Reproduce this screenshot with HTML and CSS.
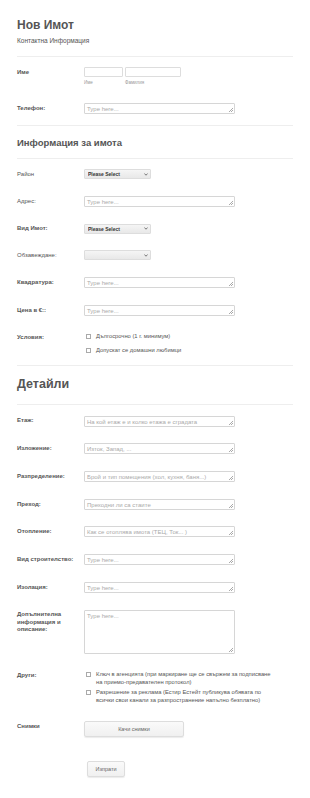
FILE: index.html
```html
<!DOCTYPE html>
<html lang="bg">
<head>
    <meta charset="UTF-8">
    <meta name="viewport" content="width=device-width, initial-scale=1.0">
    <title>Нов Имот</title>
    <link rel="stylesheet" href="styles.css">
</head>
<body>
    <form class="form" id="property-form">
        <div class="form-header">
            <h1>Нов Имот</h1>
            <div class="subheader">Контактна Информация</div>
        </div>

        <div class="section">
            <div class="row">
                <label class="label">Име</label>
                <div class="name-fields">
                    <div class="name-part">
                        <input type="text" class="input first-name">
                        <span class="sublabel">Име</span>
                    </div>
                    <div class="name-part">
                        <input type="text" class="input last-name">
                        <span class="sublabel">Фамилия</span>
                    </div>
                </div>
            </div>
            <div class="row">
                <label class="label">Телефон:</label>
                <textarea class="field" placeholder="Type here..."></textarea>
            </div>
        </div>

        <h2 class="section-title">Информация за имота</h2>
        <div class="section">
            <div class="row">
                <label class="label light">Район</label>
                <div class="select-wrap">
                    <select class="select"><option>Please Select</option></select>
                    <svg class="chevron" viewBox="0 0 6 4"><path d="M0.6 0.8 L3 3 L5.4 0.8" fill="none" stroke="#444" stroke-width="1.1"/></svg>
                </div>
            </div>
            <div class="row">
                <label class="label light">Адрес:</label>
                <textarea class="field" placeholder="Type here..."></textarea>
            </div>
            <div class="row">
                <label class="label">Вид Имот:</label>
                <div class="select-wrap">
                    <select class="select"><option>Please Select</option></select>
                    <svg class="chevron" viewBox="0 0 6 4"><path d="M0.6 0.8 L3 3 L5.4 0.8" fill="none" stroke="#444" stroke-width="1.1"/></svg>
                </div>
            </div>
            <div class="row">
                <label class="label light">Обзавеждане:</label>
                <div class="select-wrap">
                    <select class="select"><option></option></select>
                    <svg class="chevron" viewBox="0 0 6 4"><path d="M0.6 0.8 L3 3 L5.4 0.8" fill="none" stroke="#444" stroke-width="1.1"/></svg>
                </div>
            </div>
            <div class="row">
                <label class="label">Квадратура:</label>
                <textarea class="field" placeholder="Type here..."></textarea>
            </div>
            <div class="row">
                <label class="label">Цена в €::</label>
                <textarea class="field" placeholder="Type here..."></textarea>
            </div>
            <div class="row">
                <label class="label">Условия:</label>
                <div class="options spaced">
                    <label class="option"><input type="checkbox" class="check"><span>Дългосрочно (1 г. минимум)</span></label>
                    <label class="option"><input type="checkbox" class="check"><span>Допускат се домашни любимци</span></label>
                </div>
            </div>
        </div>

        <h2 class="section-title big">Детайли</h2>
        <div class="section last">
            <div class="row">
                <label class="label">Етаж:</label>
                <textarea class="field" placeholder="На кой етаж е и колко етажа е сградата"></textarea>
            </div>
            <div class="row">
                <label class="label">Изложение:</label>
                <textarea class="field" placeholder="Изток, Запад, ..."></textarea>
            </div>
            <div class="row">
                <label class="label">Разпределение:</label>
                <textarea class="field" placeholder="Брой и тип помещения (хол, кухня, баня...)"></textarea>
            </div>
            <div class="row">
                <label class="label">Преход:</label>
                <textarea class="field" placeholder="Преходни ли са стаите"></textarea>
            </div>
            <div class="row">
                <label class="label">Отопление:</label>
                <textarea class="field" placeholder="Как се отоплява имота (ТЕЦ, Ток... )"></textarea>
            </div>
            <div class="row">
                <label class="label">Вид строителство:</label>
                <textarea class="field" placeholder="Type here..."></textarea>
            </div>
            <div class="row">
                <label class="label">Изолация:</label>
                <textarea class="field" placeholder="Type here..."></textarea>
            </div>
            <div class="row">
                <label class="label">Допълнителна информация и описание:</label>
                <textarea class="field tall" placeholder="Type here..."></textarea>
            </div>
            <div class="row">
                <label class="label">Други:</label>
                <div class="options">
                    <label class="option"><input type="checkbox" class="check"><span>Ключ в агенцията (при маркиране ще се свържем за подписване на приемо-предавателен протокол)</span></label>
                    <label class="option"><input type="checkbox" class="check"><span>Разрешение за реклама (Естир Естейт публикува обявата по всички свои канали за разпространение напълно безплатно)</span></label>
                </div>
            </div>
            <div class="row">
                <label class="label">Снимки</label>
                <button type="button" class="btn upload">Качи снимки</button>
            </div>
            <div class="submit-row">
                <button type="submit" class="btn submit">Изпрати</button>
            </div>
        </div>
    </form>
</body>
</html>
```

FILE: styles.css
```css
body {
    margin: 0;
    font-family: "Liberation Sans", Arial, sans-serif;
    background-color: #fff;
    color: #555;
}

.form {
    padding: 0 17px;
}

.form-header {
    padding: 18px 0 11px;
    border-bottom: 1px solid #eee;
}

.form-header h1 {
    margin: 0;
    font-size: 12px;
    line-height: 14px;
    color: #555;
}

.subheader {
    margin-top: 5px;
    font-size: 6.5px;
    line-height: 8px;
    color: #555;
}

.section {
    padding: 2px 0 2.6px;
    border-bottom: 1px solid #eee;
}

.section.last {
    border-bottom: none;
}

.section-title {
    margin: 0;
    padding: 11px 0 9px;
    border-bottom: 1px solid #eee;
    font-size: 9.5px;
    line-height: 12px;
    font-weight: bold;
    color: #555;
}

.section-title.big {
    font-size: 12.5px;
    line-height: 14px;
    padding-bottom: 13px;
}

.row {
    display: flex;
    align-items: flex-start;
    padding: 8.35px 0;
}

.label {
    width: 67px;
    flex-shrink: 0;
    padding-top: 1.75px;
    font-size: 6px;
    line-height: 7.5px;
    font-weight: bold;
    color: #555;
}

.label.light {
    font-weight: normal;
}

.name-fields {
    display: flex;
    gap: 2px;
}

.name-part {
    display: flex;
    flex-direction: column;
}

.input {
    box-sizing: border-box;
    height: 10px;
    margin: 0;
    padding: 0 2px;
    border: 1px solid #ddd;
    border-radius: 1px;
    background: #fff;
}

.first-name {
    width: 39px;
}

.last-name {
    width: 56px;
}

.sublabel {
    margin-top: 3px;
    font-size: 4.5px;
    line-height: 6px;
    color: #999;
}

.field {
    box-sizing: border-box;
    width: 151px;
    height: 11px;
    margin: 0;
    padding: 2px 2px 0;
    border: 1px solid #d6d6d6;
    border-radius: 1px;
    background: #fff linear-gradient(135deg, transparent 0 42%, #aaa 42% 52%, transparent 52% 72%, #aaa 72% 82%, transparent 82%) no-repeat right 1px bottom 1px / 4px 4px;
    font-family: "Liberation Sans", Arial, sans-serif;
    font-size: 6px;
    line-height: 6.5px;
    color: #555;
    overflow: hidden;
    resize: none;
}

.field::placeholder {
    color: #aaa;
}

.field.tall {
    height: 44px;
}

.select-wrap {
    position: relative;
    width: 67px;
    height: 10px;
}

.select {
    appearance: none;
    display: block;
    box-sizing: border-box;
    width: 100%;
    height: 10px;
    margin: 0;
    padding: 0 3px;
    border: 1px solid #ddd;
    border-radius: 1px;
    background: linear-gradient(#f5f5f5, #e8e8e8);
    font-family: "Liberation Sans", Arial, sans-serif;
    font-size: 5px;
    line-height: 8px;
    font-weight: bold;
    color: #333;
}

.chevron {
    position: absolute;
    right: 3px;
    top: 3.5px;
    width: 4px;
    height: 3px;
}

.options {
    display: flex;
    flex-direction: column;
    gap: 2px;
    width: 194px;
}

.options.spaced {
    gap: 6px;
}

.option {
    display: flex;
    align-items: flex-start;
    font-size: 5.8px;
    line-height: 8px;
    color: #555;
}

.check {
    appearance: none;
    box-sizing: border-box;
    flex-shrink: 0;
    width: 5px;
    height: 5px;
    margin: 1.5px 5px 0 2px;
    border: 1px solid #aaa;
    background: #fff;
}

.btn {
    box-sizing: border-box;
    height: 16px;
    margin: 0;
    padding: 0;
    border: 1px solid #ddd;
    border-radius: 2px;
    background: linear-gradient(#fafafa, #f0f0f0);
    box-shadow: 0 1px 1px rgba(0, 0, 0, 0.08);
    font-family: "Liberation Sans", Arial, sans-serif;
    font-size: 5.5px;
    color: #666;
    cursor: pointer;
}

.upload {
    width: 100px;
}

.submit-row {
    padding: 12px 0 0 70px;
}

.submit {
    width: 38px;
}
```
